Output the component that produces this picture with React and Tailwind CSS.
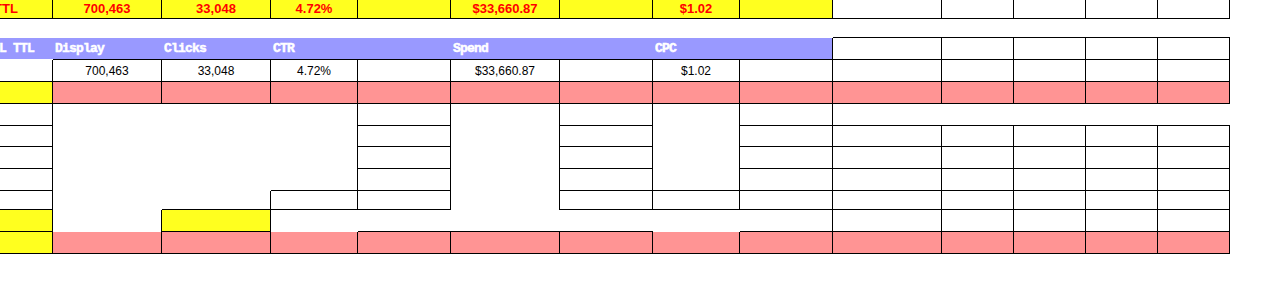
import React from "react";

const COL = ["col-start-1","col-start-2","col-start-3","col-start-4","col-start-5","col-start-6","col-start-7","col-start-8","col-start-9","col-start-10","col-start-11","col-start-12","col-start-13","col-start-14"];
const ROW = ["row-start-1","row-start-2","row-start-3","row-start-4","row-start-5","row-start-6","row-start-7","row-start-8","row-start-9","row-start-10","row-start-11","row-start-12"];
const CSPAN = ["", "col-span-1","col-span-2","col-span-3","col-span-4","col-span-5"];
const RSPAN = ["", "row-span-1","row-span-2","row-span-3","row-span-4","row-span-5"];

const Y = "bg-[#ffff1f]";
const P = "bg-[#ff9494]";
const U = "bg-[#9999ff]";
const B = "border-r border-b border-black";

function Cell({ c, r, cs = 1, rs = 1, cls = "", children }) {
  return (
    <div className={`${COL[c]} ${ROW[r]} ${CSPAN[cs]} ${RSPAN[rs]} min-w-0 ${cls}`}>
      {children}
    </div>
  );
}

const red = "flex items-center justify-center text-[13px] leading-[18px] font-bold text-[#ff0000] font-['Liberation_Sans',Arial,sans-serif] whitespace-nowrap";
const blk = "flex items-start justify-center pt-[1px] text-[12px] leading-[20px] text-black font-['Liberation_Sans',Arial,sans-serif] whitespace-nowrap";
const hdr = "flex items-center pl-[2px] text-[13px] leading-[21px] font-bold text-white tracking-[-0.8px] [-webkit-text-stroke:0.5px_white] font-['Liberation_Mono','Courier_New',monospace] whitespace-nowrap";

export default function App() {
  const cells = [];
  let k = 0;
  const add = (props, child) => cells.push(<Cell key={k++} {...props}>{child}</Cell>);

  // Row 0 (totals)
  const r0Text = { 1: "700,463", 2: "33,048", 3: "4.72%", 5: "$33,660.87", 7: "$1.02" };
  add({ c: 0, r: 0, cls: `${Y} ${B} ${red} justify-start overflow-hidden` }, <span className="-ml-[6px]">TTL</span>);
  for (let c = 1; c <= 13; c++) {
    add({ c, r: 0, cls: `${c <= 8 ? Y : ""} ${B} ${red}` }, r0Text[c] || null);
  }

  // Row 1 spacer (top line of right header cells)
  add({ c: 9, r: 1, cs: 5, cls: "border-b border-black" });

  // Row 2 header
  const hText = { 1: "Display", 2: "Clicks", 3: "CTR", 5: "Spend", 7: "CPC" };
  add({ c: 0, r: 2, cls: `${U} border-b border-white ${hdr} overflow-hidden` }, <span className="-ml-[3px]">L TTL</span>);
  for (let c = 1; c <= 7; c++) {
    add({ c, r: 2, cls: `${U} border-b border-black ${hdr}` }, hText[c] || null);
  }
  add({ c: 8, r: 2, cls: `${U} border-b border-r border-black` });
  for (let c = 9; c <= 13; c++) add({ c, r: 2, cls: B });

  // Row 3 values
  const r3Text = { 1: "700,463", 2: "33,048", 3: "4.72%", 5: "$33,660.87", 7: "$1.02" };
  for (let c = 0; c <= 13; c++) {
    add({ c, r: 3, cls: `${B} ${blk}` }, r3Text[c] || null);
  }

  // Row 4
  add({ c: 0, r: 4, cls: `${Y} ${B}` });
  for (let c = 1; c <= 13; c++) add({ c, r: 4, cls: `${P} ${B}` });

  // Rows 5-9
  for (let r = 5; r <= 9; r++) {
    add({ c: 0, r, cls: B });
    add({ c: 4, r, cls: B });
    add({ c: 6, r, cls: B });
    add({ c: 8, r, cls: B });
  }
  add({ c: 1, r: 5, cs: 2, rs: 4 });
  add({ c: 1, r: 9 });
  add({ c: 2, r: 9, cls: "border-r border-b border-black" });
  add({ c: 3, r: 5, rs: 4, cls: B });
  add({ c: 3, r: 9, cls: B });
  add({ c: 5, r: 5, rs: 5, cls: "border-r border-black" });
  add({ c: 7, r: 5, rs: 4, cls: B });
  add({ c: 7, r: 9, cls: B });
  add({ c: 9, r: 5, cs: 5, cls: "border-b border-black" });
  for (let r = 6; r <= 10; r++) {
    for (let c = 9; c <= 13; c++) add({ c, r, cls: B });
  }

  // Row 10
  add({ c: 0, r: 10, cls: `${Y} ${B}` });
  add({ c: 1, r: 10, cls: "border-r border-black" });
  add({ c: 2, r: 10, cls: `${Y} ${B}` });
  add({ c: 4, r: 10, cls: "border-b border-black" });
  add({ c: 5, r: 10, cls: "border-b border-black" });
  add({ c: 6, r: 10, cls: "border-b border-black" });
  add({ c: 8, r: 10, cls: B });

  // Row 11
  add({ c: 0, r: 11, cls: `${Y} ${B}` });
  for (let c = 1; c <= 13; c++) add({ c, r: 11, cls: `${P} ${B}` });

  return (
    <div className="w-[1274px] h-[286px] bg-white overflow-hidden">
      <div className="grid grid-cols-[53px_109px_109px_87px_93px_109px_93px_87px_93px_109px_72px_72px_72px_72px] grid-rows-[19px_19px_22px_22px_22px_22px_21px_22px_22px_19px_22px_22px]">
        {cells}
      </div>
    </div>
  );
}
